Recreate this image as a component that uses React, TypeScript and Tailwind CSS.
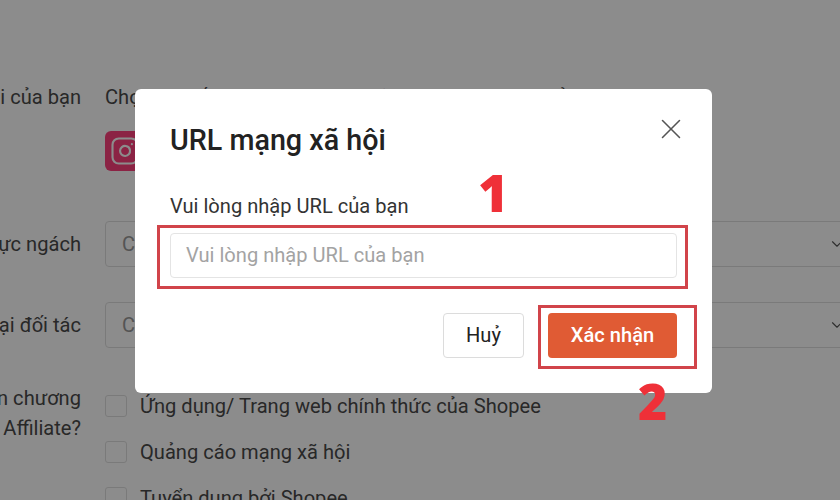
import React from 'react';
import { X, ChevronDown, Instagram } from 'lucide-react';

const FONT = "font-['Roboto','Liberation_Sans',sans-serif]";

const Label: React.FC<{ lines: string[]; className?: string }> = ({ lines, className }) => (
  <div className={`w-[81px] shrink-0 flex flex-col items-end leading-[30px] whitespace-nowrap ${className || ''}`}>
    {lines.map(line => (
      <span key={line}>{line}</span>
    ))}
  </div>
);

const SelectRow: React.FC<{ label: string; className: string }> = ({ label, className }) => (
  <div className={`flex items-center gap-6 ${className}`}>
    <Label lines={[label]} />
    <div className="w-[760px] h-[46px] shrink-0 border border-[#dedede] rounded flex items-center pl-4 pr-[22px] justify-between text-[#9a9a9a]">
      <span>Chọn</span>
      <ChevronDown size={18} strokeWidth={1.5} className="text-[#555] mr-[-4px]" />
    </div>
  </div>
);

const CheckRow: React.FC<{ text: string }> = ({ text }) => (
  <div className="flex items-center gap-[13px] h-[22px]">
    <span className="w-[22px] h-[22px] border border-[#dedede] rounded-[3px] shrink-0"></span>
    <span className="whitespace-nowrap">{text}</span>
  </div>
);

const App: React.FC = () => {
  return (
    <div className={`relative w-[840px] h-[500px] overflow-hidden bg-white text-[20.1px] text-[#4a4a4a] ${FONT}`}>
      {/* form behind the modal */}
      <div className="pt-[82px]">
        <div className="flex gap-6">
          <Label lines={['Mạng xã hội của bạn']} />
          <div>
            <div className="leading-[30px] whitespace-nowrap">Chọn ít nhất một trang mạng xã hội mà bạn đang sử dụng</div>
            <div className="mt-[19px] w-10 h-10 rounded-md bg-[#fd417c] flex items-center justify-center text-white">
              <Instagram size={30} strokeWidth={1.7} />
            </div>
          </div>
        </div>
        <SelectRow label="Lĩnh vực ngách" className="mt-[50px]" />
        <SelectRow label="Loại đối tác" className="mt-[35px]" />
        <div className="flex gap-6 mt-[35px]">
          <Label lines={['Bạn biết đến chương', 'trình Affiliate?']} />
          <div className="flex flex-col gap-6 pt-[12px]">
            <CheckRow text="Ứng dụng/ Trang web chính thức của Shopee" />
            <CheckRow text="Quảng cáo mạng xã hội" />
            <CheckRow text="Tuyển dụng bởi Shopee" />
          </div>
        </div>
      </div>

      <div className="absolute inset-0 bg-black/45"></div>

      {/* modal */}
      <div className="absolute left-[135px] top-[89px] w-[577px] h-[304px] bg-white rounded-md px-[35px] pt-[33px] text-[#222]">
        <h3 className="text-[28.7px] leading-9 font-medium">URL mạng xã hội</h3>
        <X size={34} strokeWidth={1.1} className="absolute left-[519px] top-[23px] text-[#555]" />
        <label className="block mt-[36px] leading-6 text-[#333]">Vui lòng nhập URL của bạn</label>
        <div className="mt-[15px] h-[45px] border border-[#e4e4e4] rounded flex items-center px-[15px] text-[#a3a3a3]">
          Vui lòng nhập URL của bạn
        </div>
        <div className="flex justify-end gap-6 mt-[35px]">
          <button className="w-[81px] h-[45px] border border-[#dcdcdc] rounded font-normal text-[#222]">Huỷ</button>
          <button className="w-[129px] h-[45px] rounded bg-[#e05b34] text-white font-medium">Xác nhận</button>
        </div>

        {/* annotations */}
        <div className="absolute left-[22px] top-[136px] w-[531px] h-[64px] border-[3px] border-[#d1444a]"></div>
        <div className="absolute left-[403px] top-[216px] w-[159px] h-[64px] border-[3px] border-[#d1444a]"></div>
        <span className="absolute left-[343px] top-[70px] text-[52px] leading-[66px] font-['Open_Sans',sans-serif] font-extrabold text-[#ef3038]">1</span>
        <span className="absolute left-[503px] top-[280px] text-[50px] leading-[64px] font-['Open_Sans',sans-serif] font-extrabold text-[#ef3038]">2</span>
      </div>
    </div>
  );
};

export default App;
